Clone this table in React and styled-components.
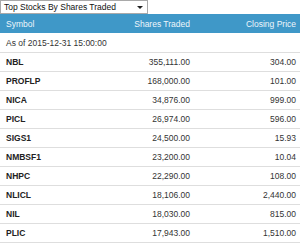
import styled, { createGlobalStyle } from "styled-components";

const GlobalStyle = createGlobalStyle`
  body {
    margin: 0;
    background: #fff;
    font-family: "Liberation Sans", Arial, sans-serif;
  }
`;

const stocks = [
  ["NBL", "355,111.00", "304.00"],
  ["PROFLP", "168,000.00", "101.00"],
  ["NICA", "34,876.00", "999.00"],
  ["PICL", "26,974.00", "596.00"],
  ["SIGS1", "24,500.00", "15.93"],
  ["NMBSF1", "23,200.00", "10.04"],
  ["NHPC", "22,290.00", "108.00"],
  ["NLICL", "18,106.00", "2,440.00"],
  ["NIL", "18,030.00", "815.00"],
  ["PLIC", "17,943.00", "1,510.00"],
];

const Widget = styled.div`
  width: 300px;
  font-size: 8.5px;
  color: #333;
`;

const Select = styled.div`
  box-sizing: border-box;
  width: 148px;
  height: 14px;
  border: 1px solid #a9a9a9;
  display: flex;
  align-items: center;
  justify-content: space-between;
  padding: 0 4px 0 3px;
  color: #111;
  font-size: 8.5px;
`;

const Caret = styled.span`
  width: 0;
  height: 0;
  border-left: 3px solid transparent;
  border-right: 3px solid transparent;
  border-top: 3px solid #222;
`;

const Table = styled.table`
  width: 300px;
  border-collapse: collapse;
  table-layout: fixed;
`;

const HeadCell = styled.th`
  height: 19px;
  padding: 0 4px 0 6px;
  background: #3f98c8;
  color: #eef6fb;
  font-weight: normal;
  text-align: ${(p) => (p.$right ? "right" : "left")};
  vertical-align: middle;
`;

const Row = styled.tr`
  border-top: ${(p) => (p.$first ? "none" : "1px solid #dedede")};
  border-bottom: ${(p) => (p.$last ? "1px solid #dedede" : "none")};
`;

const Cell = styled.td`
  height: ${(p) => (p.$tall ? "19px" : "18px")};
  padding: 0 4px 0 6px;
  white-space: nowrap;
  text-align: ${(p) => (p.$right ? "right" : "left")};
  font-weight: ${(p) => (p.$bold ? "bold" : "normal")};
  color: ${(p) => (p.$bold ? "#222" : "#333")};
  vertical-align: middle;
`;

export default function App() {
  return (
    <Widget>
      <GlobalStyle />
      <Select>
        <span>Top Stocks By Shares Traded</span>
        <Caret />
      </Select>
      <Table>
        <colgroup>
          <col style={{ width: 100 }} />
          <col style={{ width: 94 }} />
          <col style={{ width: 106 }} />
        </colgroup>
        <thead>
          <tr>
            <HeadCell>Symbol</HeadCell>
            <HeadCell $right>Shares Traded</HeadCell>
            <HeadCell $right>Closing Price</HeadCell>
          </tr>
        </thead>
        <tbody>
          <Row $first>
            <Cell $tall colSpan={3}>As of 2015-12-31 15:00:00</Cell>
          </Row>
          {stocks.map(([sym, shares, price], i) => (
            <Row key={sym} $last={i === stocks.length - 1}>
              <Cell $bold>{sym}</Cell>
              <Cell $right>{shares}</Cell>
              <Cell $right>{price}</Cell>
            </Row>
          ))}
        </tbody>
      </Table>
    </Widget>
  );
}
